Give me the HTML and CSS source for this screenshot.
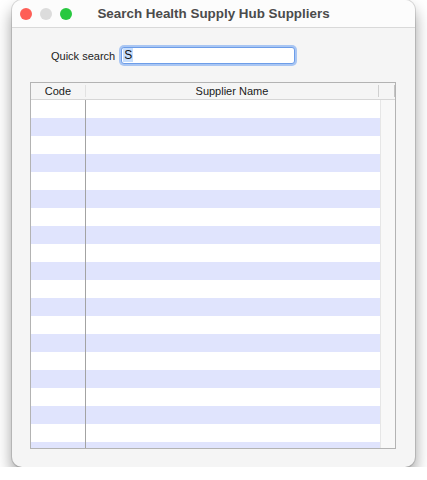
FILE: index.html
```html
<!DOCTYPE html>
<html lang="en">
<head>
  <meta charset="UTF-8" />
  <meta name="viewport" content="width=device-width, initial-scale=1.0"/>
  <title>Search Health Supply Hub Suppliers</title>
  <link rel="stylesheet" href="styles.css">
</head>
<body>

  <div class="window">
    <div class="titlebar">
      <div class="lights">
        <span class="light red"></span>
        <span class="light gray"></span>
        <span class="light green"></span>
      </div>
      <div class="title">Search Health Supply Hub Suppliers</div>
    </div>

    <div class="content">
      <div class="search-row">
        <label class="search-label">Quick search</label>
        <div class="search-box"><span class="selected">S</span></div>
      </div>

      <div class="table">
        <div class="table-head">
          <div class="th th-code">Code</div>
          <div class="th th-name">Supplier Name</div>
          <div class="th th-corner"></div>
        </div>
        <div class="table-body">
          <div class="rows" id="rows"></div>
          <div class="scroll-track"></div>
        </div>
      </div>
    </div>
  </div>

  <script>
    const rows = document.getElementById("rows");
    for (let i = 0; i < 20; i++) {
      const row = document.createElement("div");
      row.className = i % 2 ? "row odd" : "row";
      row.innerHTML = `<div class="cell cell-code"></div><div class="cell cell-name"></div>`;
      rows.appendChild(row);
    }
  </script>
</body>
</html>
```

FILE: styles.css
```css
body {
  margin: 0;
  background: #ffffff;
  font-family: "Liberation Sans", Arial, sans-serif;
  overflow: hidden;
}
.window {
  margin: 0 12px;
  width: 403px;
  height: 467px;
  background: #f5f5f5;
  border-radius: 10px;
  box-shadow: 0 0 0 1px rgba(0,0,0,0.12), 0 9px 16px rgba(0,0,0,0.4);
  overflow: hidden;
}
.titlebar {
  height: 27px;
  background: #fcfcfc;
  border-bottom: 1px solid #d9d9d9;
  display: flex;
  align-items: center;
  position: relative;
}
.lights {
  display: flex;
  gap: 8px;
  padding-left: 8px;
}
.light {
  width: 12px;
  height: 12px;
  border-radius: 50%;
}
.light.red { background: #fe5f57; }
.light.gray { background: #dcdcdc; }
.light.green { background: #28c840; }
.title {
  position: absolute;
  left: 0;
  right: 0;
  top: 6px;
  text-align: center;
  font-size: 13.4px;
  font-weight: bold;
  color: #4b4b4b;
}
.content {
  padding: 17px 0 0 18px;
}
.search-row {
  display: flex;
  align-items: center;
  gap: 6px;
  padding-left: 21px;
  height: 21px;
}
.search-label {
  font-size: 11px;
  color: #222;
}
.search-box {
  width: 171px;
  height: 15px;
  background: #fff;
  border: 1px solid #6d9de8;
  box-shadow: 0 0 0 2px #a9c6f3;
  border-radius: 3px;
  font-size: 12px;
  line-height: 15px;
  padding-left: 1px;
  color: #111;
}
.selected {
  background: #c7defc;
  padding: 0 1px;
}
.table {
  margin-top: 16px;
  width: 364px;
  height: 365px;
  border: 1px solid #b3b3b3;
  background: #f5f5f5;
}
.table-head {
  display: flex;
  height: 16px;
  border-bottom: 1px solid #d6d6d6;
  font-size: 11px;
  color: #1a1a1a;
}
.th {
  display: flex;
  align-items: center;
  justify-content: center;
}
.th-code {
  width: 54px;
  border-right: 1px solid #e2e2e2;
  margin: 2px 0;
}
.th-name {
  width: 293px;
  border-right: 1px solid #d0d0d0;
  margin: 2px 0;
}
.th-corner {
  width: 15px;
  border-right: 1px solid #c4c4c4;
  margin: 2px 0;
}
.table-body {
  display: flex;
  height: 348px;
  overflow: hidden;
}
.rows {
  width: 349px;
  overflow: hidden;
}
.row {
  display: flex;
  height: 18px;
  background: #ffffff;
}
.row.odd {
  background: #e0e4fd;
}
.cell-code {
  width: 54px;
  border-right: 1px solid #a3a3a3;
}
.cell-name {
  flex: 1;
}
.scroll-track {
  width: 14px;
  background: #f8f8f8;
  border-left: 1px solid #e6e6e6;
}
```
